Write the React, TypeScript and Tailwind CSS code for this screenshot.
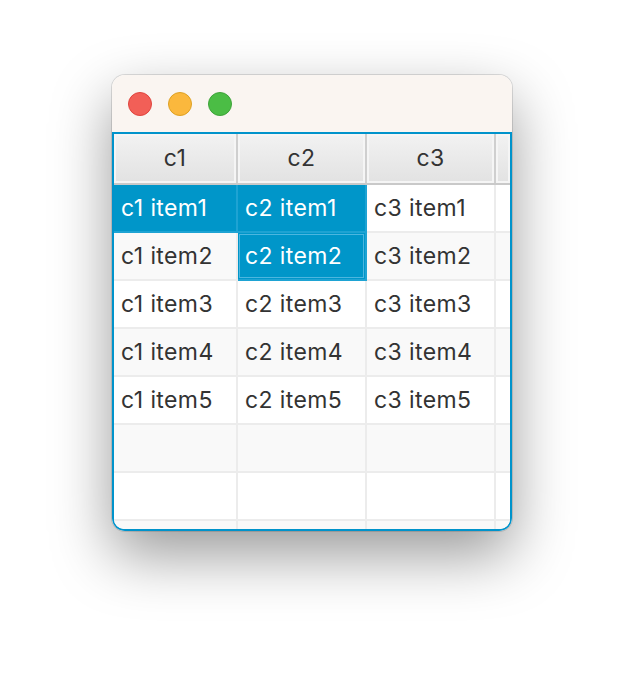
const COLUMNS = [
  { key: 'c1', width: 'w-[124px]' },
  { key: 'c2', width: 'w-[129px]' },
  { key: 'c3', width: 'w-[129px]' },
];

const ROW_COUNT = 8;
const ITEM_COUNT = 5;

// selected cells: [row, col]
const SELECTED = new Set(['0-0', '0-1', '1-1']);
const FOCUSED = '1-1';

const TrafficLights = () => (
  <div className="flex items-center gap-4 pl-[16px]">
    <span className="h-6 w-6 rounded-full border border-[#e0443e] bg-[#f25f57]" />
    <span className="h-6 w-6 rounded-full border border-[#dea123] bg-[#fbb83d]" />
    <span className="h-6 w-6 rounded-full border border-[#3ea33a] bg-[#4bbd45]" />
  </div>
);

const HeaderRow = () => (
  <div className="flex h-[51px] shrink-0 border-b-2 border-[#c9c9c9]">
    {COLUMNS.map((col) => (
      <div
        key={col.key}
        className={`${col.width} flex items-center justify-center border-r-2 border-[#cfcfcf] bg-gradient-to-b from-[#f2f2f2] to-[#e2e2e2] text-[23px] tracking-[0.4px] text-[#333] shadow-[inset_0_0_0_2px_#f5f5f5]`}
      >
        {col.key}
      </div>
    ))}
    <div className="flex-1 bg-gradient-to-b from-[#f2f2f2] to-[#e2e2e2] shadow-[inset_0_0_0_2px_#f5f5f5]" />
  </div>
);

const Cell = ({ row, col, width }: { row: number; col: number; width: string }) => {
  const id = `${row}-${col}`;
  const selected = SELECTED.has(id);
  const focused = id === FOCUSED;
  const hasItem = row < ITEM_COUNT;

  return (
    <div
      className={`${width} flex items-center border-r-2 border-b-2 pl-[7px] text-[23px] tracking-[0.4px] ${
        selected ? 'border-[#1ea3d3] bg-[#0096c9] text-white' : 'border-[#ececec] text-[#333]'
      } ${focused ? 'shadow-[inset_0_0_0_1px_#0096c9,inset_0_0_0_2px_#4cb6df]' : ''}`}
    >
      {hasItem ? `${COLUMNS[col].key} item${row + 1}` : ''}
    </div>
  );
};

export default function App() {
  return (
    <div className="min-h-[680px] bg-white pt-[75px]" style={{ fontFamily: 'Inter, "Noto Sans", sans-serif' }}>
      <div className="mx-auto flex h-[456px] w-[400px] flex-col overflow-hidden rounded-[13px] shadow-[0_0_0_1px_rgba(0,0,0,0.12),0_24px_60px_rgba(0,0,0,0.4)]">
        <div className="flex h-[57px] shrink-0 items-center bg-[#faf5f1]">
          <TrafficLights />
        </div>
        <div className="flex min-h-0 flex-1 flex-col overflow-hidden rounded-b-[12px] border-2 border-[#0093cb] bg-white">
          <HeaderRow />
          <div className="flex flex-col">
            {Array.from({ length: ROW_COUNT }, (_, row) => (
              <div key={row} className={`flex h-[48px] shrink-0 ${row % 2 === 1 ? 'bg-[#f9f9f9]' : 'bg-white'}`}>
                {COLUMNS.map((col, colIndex) => (
                  <Cell key={col.key} row={row} col={colIndex} width={col.width} />
                ))}
                <div className="flex-1 border-b-2 border-[#ececec]" />
              </div>
            ))}
          </div>
        </div>
      </div>
    </div>
  );
}
